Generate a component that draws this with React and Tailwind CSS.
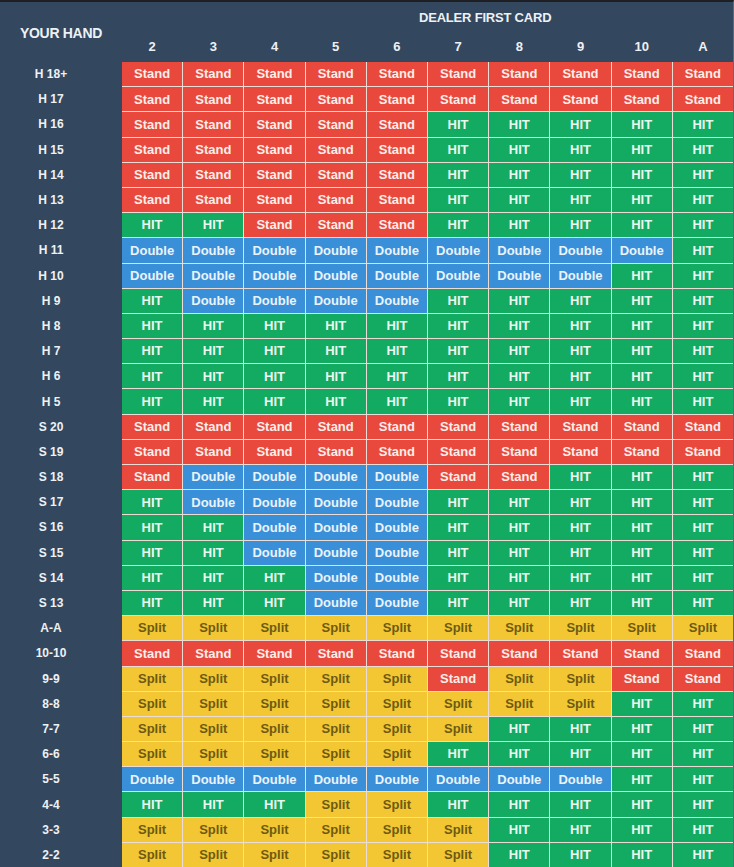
const DEALER = ["2", "3", "4", "5", "6", "7", "8", "9", "10", "A"];

// S = Stand, H = HIT, D = Double, P = Split
const ROWS = [
  ["H 18+", "SSSSSSSSSS"],
  ["H 17", "SSSSSSSSSS"],
  ["H 16", "SSSSSHHHHH"],
  ["H 15", "SSSSSHHHHH"],
  ["H 14", "SSSSSHHHHH"],
  ["H 13", "SSSSSHHHHH"],
  ["H 12", "HHSSSHHHHH"],
  ["H 11", "DDDDDDDDDH"],
  ["H 10", "DDDDDDDDHH"],
  ["H 9", "HDDDDHHHHH"],
  ["H 8", "HHHHHHHHHH"],
  ["H 7", "HHHHHHHHHH"],
  ["H 6", "HHHHHHHHHH"],
  ["H 5", "HHHHHHHHHH"],
  ["S 20", "SSSSSSSSSS"],
  ["S 19", "SSSSSSSSSS"],
  ["S 18", "SDDDDSSHHH"],
  ["S 17", "HDDDDHHHHH"],
  ["S 16", "HHDDDHHHHH"],
  ["S 15", "HHDDDHHHHH"],
  ["S 14", "HHHDDHHHHH"],
  ["S 13", "HHHDDHHHHH"],
  ["A-A", "PPPPPPPPPP"],
  ["10-10", "SSSSSSSSSS"],
  ["9-9", "PPPPPSPPSS"],
  ["8-8", "PPPPPPPPHH"],
  ["7-7", "PPPPPPHHHH"],
  ["6-6", "PPPPPHHHHH"],
  ["5-5", "DDDDDDDDHH"],
  ["4-4", "HHHPPHHHHH"],
  ["3-3", "PPPPPPHHHH"],
  ["2-2", "PPPPPPHHHH"],
];

const MOVES = {
  S: { label: "Stand", cls: "bg-[#e8493c] text-[#fbeeea]" },
  H: { label: "HIT", cls: "bg-[#13aa62] text-[#eaf7ef]" },
  D: { label: "Double", cls: "bg-[#3a90d8] text-[#eaf3fb]" },
  P: { label: "Split", cls: "bg-[#f2c733] text-[#6e5a12]" },
};

export default function App() {
  return (
    <div
      className="w-[734px] h-[867px] overflow-hidden bg-[#33475f] border-t-2 border-t-[#1d1f22] border-r border-r-[#5b6b7c] flex flex-col"
      style={{ fontFamily: '"Liberation Sans", Arial, sans-serif' }}
    >
      {/* ── Header ─────────────────────────────────── */}
      <div className="flex h-[60px] shrink-0">
        <div className="w-[122px] flex items-center justify-center pt-[2px] text-[14px] font-bold text-[#eef1f4] tracking-[-0.3px]">
          YOUR HAND
        </div>
        <div className="flex-1 flex flex-col">
          <div className="h-[32px] flex items-center pl-[297px] text-[13px] font-bold text-[#eef1f4] tracking-[-0.2px]">
            DEALER FIRST CARD
          </div>
          <div className="grid grid-cols-10 gap-x-px flex-1 items-center pb-[3px]">
            {DEALER.map((d) => (
              <div key={d} className="text-center text-[13px] font-bold text-[#eef1f4]">
                {d}
              </div>
            ))}
          </div>
        </div>
      </div>

      {/* ── Chart ──────────────────────────────────── */}
      <div className="flex">
        <div className="w-[122px] flex flex-col gap-px">
          {ROWS.map(([hand]) => (
            <div
              key={hand}
              className="h-[24.2px] flex items-center justify-center pr-[20px] text-[12px] font-bold text-[#eef1f4]"
            >
              {hand}
            </div>
          ))}
        </div>
        <div className="flex-1 grid grid-cols-10 gap-px bg-[#ecdcd6]">
          {ROWS.map(([hand, moves]) =>
            moves.split("").map((m, i) => (
              <div
                key={hand + i}
                className={`h-[24.2px] flex items-center justify-center text-[13px] font-bold ${MOVES[m].cls}`}
              >
                {MOVES[m].label}
              </div>
            ))
          )}
        </div>
      </div>
    </div>
  );
}
